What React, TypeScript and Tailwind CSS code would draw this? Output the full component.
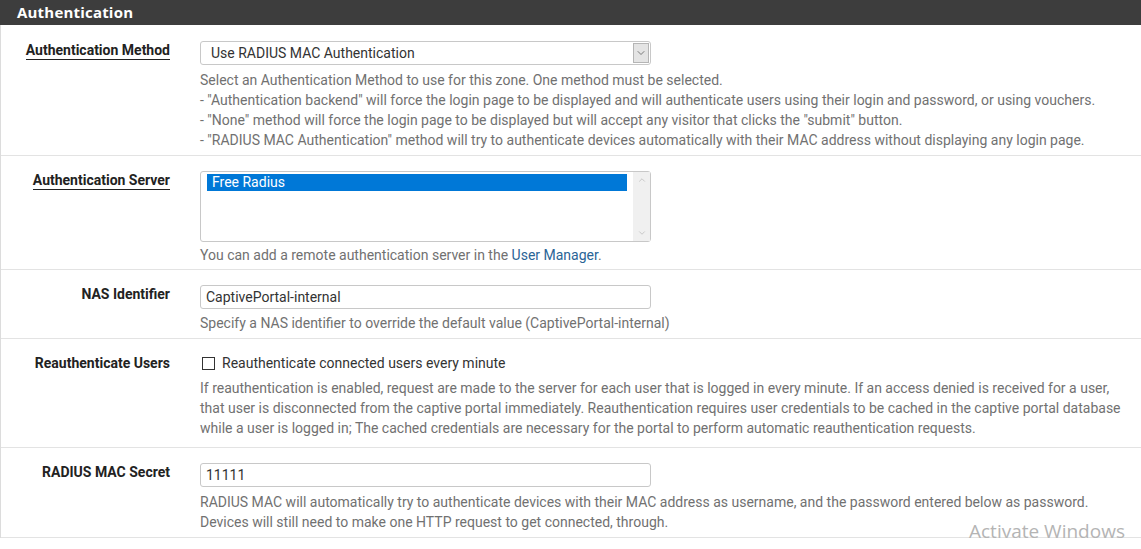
import { ChevronDown, ChevronUp } from "lucide-react";

const help = "text-[14px] leading-[20px] text-[#717171]";

function Row({
  label,
  tip,
  extra = "",
  children,
}: {
  label: string;
  tip?: boolean;
  extra?: string;
  children: React.ReactNode;
}) {
  return (
    <div className={"flex border-b border-[#e3e3e3] " + (extra || "pt-[15px] pb-[5px]")}>
      <div className="w-[184px] shrink-0 pr-[15px] mt-[-1px] text-right leading-[20px]">
        <span
          className={
            "text-[14px] leading-[20px] font-bold text-[#222] " +
            (tip ? "border-b-[1.5px] border-[#222] pb-[1px]" : "")
          }
        >
          {label}
        </span>
      </div>
      <div className="flex-1 pl-[15px] pr-[15px]">{children}</div>
    </div>
  );
}

export default function App() {
  return (
    <div
      className="relative w-[1141px] h-[549px] overflow-hidden bg-white"
      style={{ fontFamily: "Roboto, 'Liberation Sans', sans-serif" }}
    >
      {/* Panel header */}
      <div className="h-[25px] bg-[#3d3d3d] pl-[17px] flex items-center">
        <h2 className="text-[15px] font-bold text-white tracking-[0.2px] mt-[-1px]" style={{ fontFamily: "'Open Sans', sans-serif" }}>
          Authentication
        </h2>
      </div>

      <div className="border-l border-[#dcdcdc]">
        {/* Authentication Method */}
        <Row label="Authentication Method" tip extra="pt-[16px] pb-[5px]">
          <div className="flex h-[24px] w-[451px] items-center rounded-[3px] border border-[#c8c8c8] bg-white">
            <span className="flex-1 pl-[10px] text-[14px] text-[#333]">Use RADIUS MAC Authentication</span>
            <span className="mr-[1px] flex h-[20px] w-[16px] items-center justify-center border border-[#b5b5b5] bg-[#e4e4e4]">
              <ChevronDown size={12} strokeWidth={1.5} className="text-[#555]" />
            </span>
          </div>
          <div className={"mt-[5px] " + help}>
            Select an Authentication Method to use for this zone. One method must be selected.
            <br />- "Authentication backend" will force the login page to be displayed and will authenticate users using their login and password, or using vouchers.
            <br />- "None" method will force the login page to be displayed but will accept any visitor that clicks the "submit" button.
            <br />- "RADIUS MAC Authentication" method will try to authenticate devices automatically with their MAC address without displaying any login page.
          </div>
        </Row>

        {/* Authentication Server */}
        <Row label="Authentication Server" tip extra="pt-[15px] pb-[4px]">
          <div className="flex h-[71px] w-[451px] rounded-[3px] border border-[#c8c8c8] bg-white">
            <div className="flex-1 pl-[6px] pt-[2px] pr-[6px]">
              <div className="h-[17px] bg-[#0078d7] pl-[5px] text-[14px] leading-[17px] text-white">Free Radius</div>
            </div>
            <div className="flex w-[17px] flex-col items-center justify-between bg-[#f0f0f0] py-[3px]">
              <ChevronUp size={10} strokeWidth={1.5} className="text-[#b0b0b0]" />
              <ChevronDown size={10} strokeWidth={1.5} className="text-[#b0b0b0]" />
            </div>
          </div>
          <div className={"mt-[3px] " + help}>
            You can add a remote authentication server in the{" "}
            <a className="text-[#2a6496]">User Manager</a>.
          </div>
        </Row>

        {/* NAS Identifier */}
        <Row label="NAS Identifier" extra="pt-[15px] pb-[5px]">
          <div className="flex h-[24px] w-[451px] items-center rounded-[3px] border border-[#c8c8c8] bg-white pl-[5px] text-[14px] text-[#333]">
            CaptivePortal-internal
          </div>
          <div className={"mt-[4px] " + help}>
            Specify a NAS identifier to override the default value (CaptivePortal-internal)
          </div>
        </Row>

        {/* Reauthenticate Users */}
        <Row label="Reauthenticate Users" extra="pt-[15px] pb-[9px]">
          <label className="flex h-[20px] items-center text-[14px] text-[#333] mt-[-1px]">
            <span className="ml-[2px] mr-[7px] inline-block h-[13px] w-[13px] border border-[#333] bg-white" />
            Reauthenticate connected users every minute
          </label>
          <div className={"mt-[5px] " + help}>
            If reauthentication is enabled, request are made to the server for each user that is logged in every minute. If an access denied is received for a user, that user is disconnected from the captive portal immediately. Reauthentication requires user credentials to be cached in the captive portal database while a user is logged in; The cached credentials are necessary for the portal to perform automatic reauthentication requests.
          </div>
        </Row>

        {/* RADIUS MAC Secret */}
        <Row label="RADIUS MAC Secret">
          <div className="flex h-[24px] w-[451px] items-center rounded-[3px] border border-[#c8c8c8] bg-white pl-[5px] text-[14px] text-[#333]">
            11111
          </div>
          <div className={"mt-[5px] " + help}>
            RADIUS MAC will automatically try to authenticate devices with their MAC address as username, and the password entered below as password.
            <br />
            Devices will still need to make one HTTP request to get connected, through.
          </div>
        </Row>
      </div>

      {/* Windows watermark */}
      <div className="pointer-events-none absolute left-[969px] top-[518px] text-[19px] leading-[26px] text-[#b4b4b4]" style={{ fontFamily: "'Open Sans', sans-serif" }}>
        Activate Windows
        <div className="text-[13px] leading-[18px]">Go to Settings to activate Windows.</div>
      </div>
    </div>
  );
}
